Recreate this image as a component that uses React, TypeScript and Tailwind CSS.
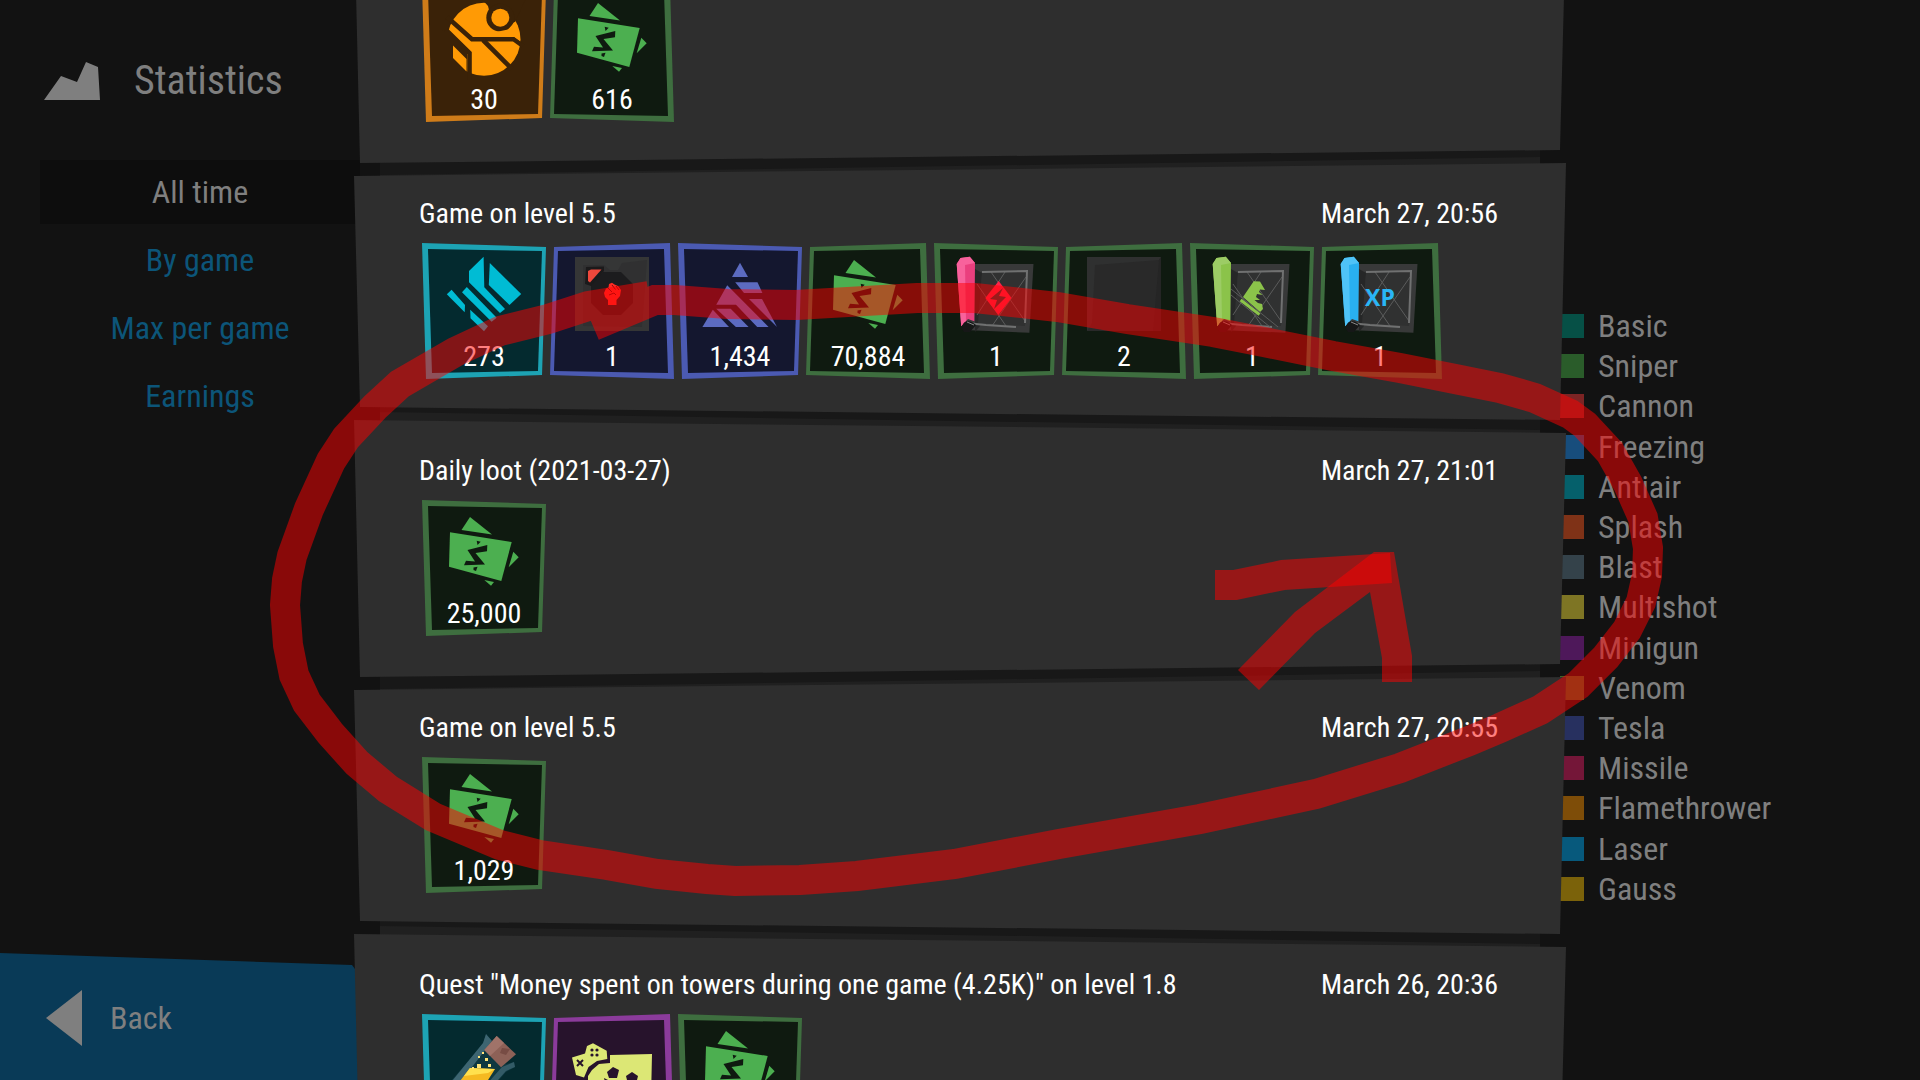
import type { ReactNode } from "react";

interface Loot {
  tone: keyof typeof TONES;
  icon: ReactNode;
  count?: string;
}

interface Entry {
  title?: string;
  date?: string;
  loot: Loot[];
}

const TONES = {
  green: { border: "#3e6e3f", fill: "#0f1a10" },
  teal: { border: "#1da3b4", fill: "#042a2f" },
  indigo: { border: "#4b5ab2", fill: "#14172f" },
  orange: { border: "#cf7c19", fill: "#3a2208" },
  purple: { border: "#8b3b9b", fill: "#27132c" },
};

const TABS = ["All time", "By game", "Max per game", "Earnings"];

const TOWERS = [
  { name: "Basic", color: "bg-[#065046]" },
  { name: "Sniper", color: "bg-[#2a5c2a]" },
  { name: "Cannon", color: "bg-[#7c2424]" },
  { name: "Freezing", color: "bg-[#174d7c]" },
  { name: "Antiair", color: "bg-[#05606b]" },
  { name: "Splash", color: "bg-[#7f3217]" },
  { name: "Blast", color: "bg-[#34424a]" },
  { name: "Multishot", color: "bg-[#7e7524]" },
  { name: "Minigun", color: "bg-[#4e185a]" },
  { name: "Venom", color: "bg-[#456125]" },
  { name: "Tesla", color: "bg-[#27305f]" },
  { name: "Missile", color: "bg-[#741638]" },
  { name: "Flamethrower", color: "bg-[#7e4d08]" },
  { name: "Laser", color: "bg-[#07597c]" },
  { name: "Gauss", color: "bg-[#7b620a]" },
];

// All icons share the 124x136 coordinate space of a tile
function Money() {
  return (
    <>
      <g fill="#4caf50">
        <path d="M48 17L70 34.500L39.500 30Z" />
        <path d="M28 32.300L89.700 42L79.300 81L27 66.700Z" />
        <path d="M91.300 51.700L96.700 57.300L86.700 67.300Z" />
        <path d="M62.300 80L72 82L69 85.700Z" />
      </g>
      <g fill="#0f1a10">
        <path d="M45.500 50L65.300 45L65 51.300L53.500 53L63 64.500L42 65.300L44 60.700L53 61.500Z" />
        <path d="M54.700 40.700L58.700 41.700L55.500 45Z" />
        <path d="M51.500 67.500L55.500 66.700L54 71L51.500 70Z" />
      </g>
    </>
  );
}

function Orb() {
  return (
    <>
      <circle cx="62" cy="53.300" r="36.500" fill="#ff9a05" />
      <g fill="#3a2208">
        <path d="M57 10L66 20L72 44L93 36L106 8Z" />
        <circle cx="78.300" cy="31.700" r="14" />
        <path d="M20 44L26 46L45 67V94H20Z" />
      </g>
      <g fill="none" stroke="#3a2208" strokeWidth="4.600">
        <path d="M25 31L50 53.300H92L101 60" />
        <path d="M61 54L90 83" />
        <path d="M24 44L47.500 67V94" />
      </g>
      <path d="M93 36L98 50L98 55L92 50.800L74 51V46L86 43.500Z" fill="#ff9a05" />
      <circle cx="78.300" cy="31.700" r="9" fill="#ff9a05" />
      <path d="M31 59.500L44.500 73V85.500L31 72Z" fill="#ff9a05" />
    </>
  );
}

function Shards() {
  return (
    <g fill="#00bcd4">
      <path d="M61.600 13.700L62.300 44.300L83 66L78 70L47 39.300V28Z" />
      <path d="M67.800 20L99.200 51L87.500 62L66.800 42Z" />
      <path d="M44.800 44L74.700 74.700L69.600 78.700L40 49.300Z" />
      <path d="M29.600 46.700L43 62L42.700 69.300L24.800 51.300Z" />
      <path d="M48.200 66.700L66 83.300L62 88.300L48.500 75.300Z" />
    </g>
  );
}

function Pyramid() {
  return (
    <g fill="#5c6bc0">
      <path d="M62 19.700L70 34H54Z" />
      <path d="M57.200 39.300H79.500L84.400 50H66Z" />
      <path d="M49.200 42.300L90.600 84H79.200L58 61.700H38.200Z" />
      <path d="M71 56H84L99 84Z" />
      <path d="M34.800 66.700L51 84H24.400Z" />
      <path d="M38.200 65.700H52.700L70.600 84H57.900Z" />
    </g>
  );
}

function PowerCard() {
  return (
    <>
      <rect x="25" y="14" width="74" height="74" fill="#353636" />
      <path d="M33 22H54L60 27H68L72 20L97 17L92 84L33 83Z" fill="#303031" />
      <path d="M53 29H71L83 41V60L71 72H53L41 60V41Z" fill="#1c1c1e" />
      <path d="M36 24L54 23.500L54 28L41 43L35 41Z" fill="#1b1a1b" />
      <path d="M38 28L41 26.500L51.500 26.500L40 39.500L38 38Z" fill="#f0483c" />
      <path
        d="M54 50L56 45.500L58.500 44.500L59 41L62 39.800L64.500 41.500L68 43L71 47L70 53L66.500 57L66.500 62H58V57L55 54Z"
        fill="#ff2a24"
      />
      <path d="M58 45L62 49M62 42L65.500 46.500M66 43L69 47M59 52L64 50L66 52" fill="none" stroke="#7c0d0c" strokeWidth="1" />
    </>
  );
}

function BlankCard() {
  return (
    <>
      <rect x="25" y="14" width="74" height="74" fill="#292929" />
      <path d="M25 14H99L97 17L33 22L30 80L25 88Z" fill="#2f3030" />
      <path d="M97 17L99 14V88H91Z" fill="#252525" />
    </>
  );
}

interface ScrollProps {
  light: string;
  main: string;
  children: ReactNode;
}

function Scroll({ light, main, children }: ScrollProps) {
  return (
    <>
      <path d="M36 21H99.500L95.400 89.700L30 87Z" fill="#383939" />
      <path d="M41 26L48 30L46 83L41 89Z" fill="#262727" />
      <path d="M48 29L93 28L91 83L44 80Z" fill="#303131" />
      <g fill="none" stroke="#5b5c5c" strokeWidth="1">
        <path d="M43 41L72 83M57 29L91 78M71 29L43 72M92 34L58 83" />
      </g>
      <path d="M48 29L93 28L91 80" fill="none" stroke="#707171" strokeWidth="2" />
      <path d="M32 80L52 82L82 84" fill="none" stroke="#707171" strokeWidth="2" />
      <path d="M22.700 21L26.500 15L35.800 13.700L41 20L40.300 78.300L34 76L27.200 83.300Z" fill={main} />
      <path d="M22.700 21L31 21L32 78L27.200 83.300Z" fill={light} />
      <path d="M22.700 21L26.500 15L35.800 13.700L41 20L31 22Z" fill={light} />
      <path d="M28 86C28 79 32 77 38 79L42 82L36 89H30Z" fill="#161717" />
      <path d="M33 79L40 82" stroke="#888" strokeWidth="1" />
      {children}
    </>
  );
}

function BoltScroll() {
  return (
    <Scroll light="#f8629c" main="#ea3f7e">
      <path d="M64.700 38L77.500 55L64.400 72L51.300 55Z" fill="#ff2448" />
      <path d="M69 45L56 56L63 57L60 66L72 54L65 53Z" fill="#353636" />
    </Scroll>
  );
}

function BootScroll() {
  return (
    <Scroll light="#9ccc65" main="#8bc34a">
      <path
        d="M63.700 38.300L70 38.500L75 47L70 46.500L69 49L72.500 52L67 51L66 54L70 57L64.500 57L68 60L72 61L73 66L70 69L53 54Z"
        fill="#8bc34a"
      />
      <path d="M50.600 57L69.500 71.500" stroke="#8bc34a" strokeWidth="3" />
      <path d="M41 46L88 84M41 52L80 84" stroke="#5b5c5c" strokeWidth="1" />
    </Scroll>
  );
}

function XpScroll() {
  return (
    <Scroll light="#4fc3f7" main="#29b0f0">
      <text
        x="62"
        y="63"
        textAnchor="middle"
        fontSize="23"
        fontWeight="700"
        fontFamily="'Open Sans', sans-serif"
        fill="#29b6f6"
      >
        XP
      </text>
    </Scroll>
  );
}

function Flask() {
  return (
    <>
      <path d="M64 20L70 27L66 36L84 50L92 48L93 53L84 58L56 90L20 88L28 68L61 30Z" fill="#0f3840" />
      <path d="M64 20L70 27L34 74L26 72L61 29Z" fill="#3d6571" />
      <path d="M92 48L93 53L84 57L60 84L56 80L80 53Z" fill="#335b67" />
      <path d="M74.700 22L94 40.300L79 53.300L62.300 36Z" fill="#8d6157" />
      <path d="M74.700 22L82 29L68 42L62.300 36Z" fill="#a07369" />
      <path d="M80 34L88 35L84 41L78 39Z" fill="#774c44" />
      <path d="M48 54L73 55L56 82L28 80Z" fill="#f5b921" />
      <path d="M48 54L73 55L66 59L42 62Z" fill="#ffe04d" />
      <g fill="#ffe57a">
        <rect x="55" y="50" width="4" height="4" />
        <rect x="63" y="44" width="3" height="3" />
        <rect x="56" y="42" width="2" height="2" />
        <rect x="60" y="38" width="2" height="2" />
        <rect x="66" y="50" width="3" height="3" />
        <rect x="50" y="53" width="2" height="2" />
      </g>
    </>
  );
}

function GamePieces() {
  return (
    <>
      <g fill="#dce775">
        <path d="M43 29.300L56.700 36.700L57.300 45L47 47L38.500 53L34 63.500L26 61L22 43.500L35 39.500L37 32Z" />
        <path d="M60 41L102 40L101 86H38V62L42 56L49 50L60 49Z" />
      </g>
      <g fill="#27132c">
        <circle cx="42" cy="36" r="1.600" />
        <circle cx="47" cy="36" r="1.600" />
        <circle cx="42" cy="41" r="1.600" />
        <circle cx="47" cy="41" r="1.600" />
        <path d="M63 53L69 56L67 64H59L57 58Z" />
        <path d="M82 58L88 62L86 70H78L76 62Z" />
        <path d="M54 64L58 66L55 68Z" />
      </g>
      <path d="M27 46L33 52M33 46L27 52" stroke="#27132c" strokeWidth="2" />
    </>
  );
}

const ENTRIES: Entry[] = [
  {
    loot: [
      { tone: "orange", icon: <Orb />, count: "30" },
      { tone: "green", icon: <Money />, count: "616" },
    ],
  },
  {
    title: "Game on level 5.5",
    date: "March 27, 20:56",
    loot: [
      { tone: "teal", icon: <Shards />, count: "273" },
      { tone: "indigo", icon: <PowerCard />, count: "1" },
      { tone: "indigo", icon: <Pyramid />, count: "1,434" },
      { tone: "green", icon: <Money />, count: "70,884" },
      { tone: "green", icon: <BoltScroll />, count: "1" },
      { tone: "green", icon: <BlankCard />, count: "2" },
      { tone: "green", icon: <BootScroll />, count: "1" },
      { tone: "green", icon: <XpScroll />, count: "1" },
    ],
  },
  {
    title: "Daily loot (2021-03-27)",
    date: "March 27, 21:01",
    loot: [{ tone: "green", icon: <Money />, count: "25,000" }],
  },
  {
    title: "Game on level 5.5",
    date: "March 27, 20:55",
    loot: [{ tone: "green", icon: <Money />, count: "1,029" }],
  },
  {
    title: 'Quest "Money spent on towers during one game (4.25K)" on level 1.8',
    date: "March 26, 20:36",
    loot: [
      { tone: "teal", icon: <Flask /> },
      { tone: "purple", icon: <GamePieces /> },
      { tone: "green", icon: <Money /> },
    ],
  },
];

function LootTile({ loot, flipped }: { loot: Loot; flipped: boolean }) {
  const tone = TONES[loot.tone];
  return (
    <li className="relative flex h-[136px] w-[124px] items-end justify-center pb-[3px]">
      <svg viewBox="0 0 124 136" className="absolute inset-0 h-full w-full" aria-hidden="true">
        <path d={flipped ? "M4 4L120 0L124 136L0 132Z" : "M0 0L124 4L120 132L4 136Z"} fill={tone.border} />
        <path d={flipped ? "M8 8L114 6L118 130L4 128Z" : "M6 6L120 8L116 128L10 130Z"} fill={tone.fill} />
        {loot.icon}
      </svg>
      {loot.count && <span className="relative text-[28px] leading-[38px] text-white">{loot.count}</span>}
    </li>
  );
}

function EntryCard({ entry, flipped }: { entry: Entry; flipped: boolean }) {
  return (
    <li className="relative h-[257px] shrink-0 px-16 pt-[33px]">
      <div
        className={`absolute -top-2 right-[26px] left-[26px] h-10 bg-[#202020] ${
          flipped
            ? "[clip-path:polygon(0_20px,100%_2px,100%_100%,0_100%)]"
            : "[clip-path:polygon(0_0,100%_18px,100%_100%,0_100%)]"
        }`}
      />
      <div
        className={`absolute inset-0 bg-[#2e2e2e] ${
          flipped
            ? "[clip-path:polygon(0_13px,100%_0,calc(100%-6px)_100%,6px_calc(100%-13px))]"
            : "[clip-path:polygon(0_0,100%_13px,calc(100%-6px)_calc(100%-13px),6px_100%)]"
        }`}
      />
      <div className="relative flex h-9 justify-between pr-1 pl-px text-[28px] leading-9 text-white">
        {entry.title && <h2>{entry.title}</h2>}
        {entry.date && <time>{entry.date}</time>}
      </div>
      <ul className="relative ml-1 mt-[11px] flex gap-1">
        {entry.loot.map((loot, i) => (
          <LootTile key={i} loot={loot} flipped={i % 2 === 1} />
        ))}
      </ul>
    </li>
  );
}

export default function App() {
  return (
    <div className="relative flex h-screen overflow-hidden bg-[#121212] font-['Roboto_Condensed','Liberation_Sans_Narrow',Roboto,sans-serif] text-[#7f7f7f]">
      {/* Sidebar */}
      <aside className="flex w-[360px] shrink-0 flex-col">
        <header className="flex h-40 items-center gap-[34px] pt-px pl-11">
          <svg viewBox="0 0 56 38" className="h-[38px] w-14 fill-[#7f7f7f]" aria-hidden="true">
            <path d="M0 38L17 14L33 20L42 0L54 5L56 38Z" />
          </svg>
          <h1 className="text-[40px] leading-none">Statistics</h1>
        </header>
        <nav className="ml-10 flex flex-col gap-1">
          {TABS.map((tab, i) => (
            <button
              key={tab}
              className={`h-16 text-[32px] ${i === 0 ? "bg-[#0d0d0d]" : "text-[#0c5579]"}`}
            >
              {tab}
            </button>
          ))}
        </nav>
        <button className="mt-auto flex h-[127px] items-center gap-7 bg-[#093a57] pt-0.5 pl-[46px] text-[32px] [clip-path:polygon(0_0,352px_12px,358px_20px,358px_100%,0_100%)]">
          <svg viewBox="0 0 36 56" className="h-14 w-9 fill-[#7f7f7f]" aria-hidden="true">
            <path d="M36 0V56L0 28Z" />
          </svg>
          Back
        </button>
      </aside>

      {/* Loot history */}
      <main className="z-10 -mx-1.5 min-w-0 flex-1 overflow-hidden">
        <ul className="-mt-[94px] flex flex-col bg-[linear-gradient(#181818,#181818)] bg-[length:calc(100%-52px)_100%] bg-center bg-no-repeat">
          {ENTRIES.map((entry, i) => (
            <EntryCard key={i} entry={entry} flipped={i % 2 === 1} />
          ))}
        </ul>
      </main>

      {/* Chart legend */}
      <aside className="w-[360px] shrink-0 pt-[314px]">
        <ul className="flex h-[587px] flex-col justify-between">
          {TOWERS.map((tower) => (
            <li key={tower.name} className="flex h-6 items-center gap-3.5 text-[32px] leading-6">
              <span className={`h-6 w-6 ${tower.color}`} />
              {tower.name}
            </li>
          ))}
        </ul>
      </aside>

      {/* Marker strokes */}
      <svg
        viewBox="0 0 1920 1080"
        className="pointer-events-none absolute inset-0 z-20 h-full w-full fill-none stroke-[#ff0000]/50 stroke-[30px]"
        aria-hidden="true"
      >
        <path d="M593 326L655 300L675 300L727 304L796 305L865 301L917 298L975 298L1058 307L1127 319L1213 332L1264 342L1333 356L1400 368L1460 380L1500 388L1535 398L1570 414L1585 425L1610 452L1628 484L1643 518L1648 548L1647 575L1641 602L1627 630L1606 657L1578 685L1540 710L1500 728L1469 741L1400 768L1316 794L1200 819L1059 844L955 864L857 876L800 880L735 881L707 879L657 874L607 865L540 855L500 845L433 817L388 789L357 763L330 733L307 703L294 675L288 645L285 605L287 580L292 556L309 509L331 461L346 438L375 407L400 384L455 352L500 331L548 319L588 306L649 296" />
        <path d="M1215 585H1235L1283 575L1391 568" />
        <path
          className="fill-[#ff0000]/50 stroke-none"
          d="M1238 670L1295 612L1374 552H1394L1412 656V682H1382V658L1370 592L1315 633L1259 690Z"
        />
      </svg>
    </div>
  );
}
